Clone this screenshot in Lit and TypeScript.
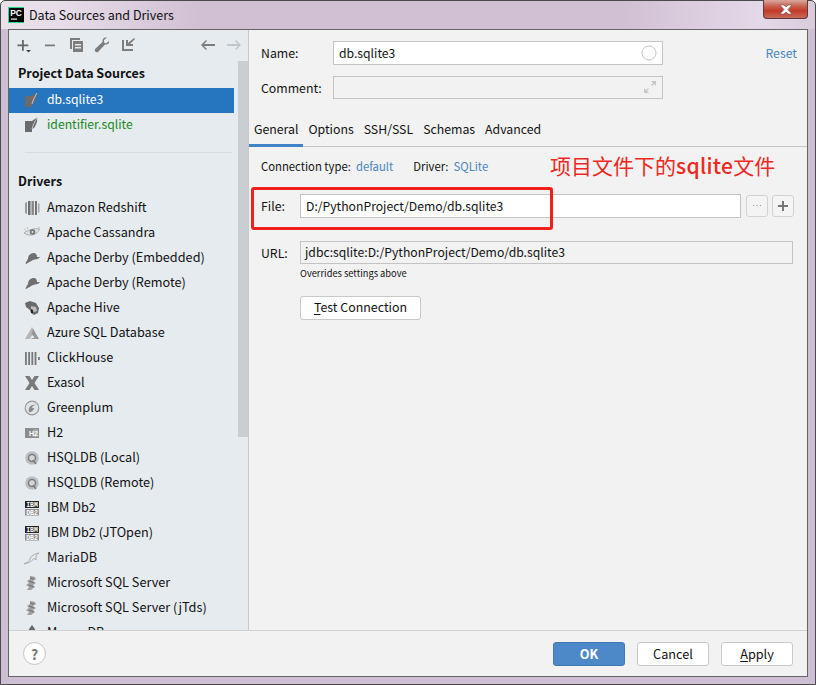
import { LitElement, html, css, svg } from "lit";
import { customElement } from "lit/decorators.js";

const G = "#7d7d7d";

// driver icons, 16x16 in the list
const icons: Record<string, unknown> = {
  sqlite: svg`<path d="M1 4h7l5-3.500c1 3-1 8-3 10.500l-2 1v3H1z" fill="#6b6b6b"/><path d="M8 12c1-4 3-8 5-11" stroke="#d8dde2" stroke-width=".8" fill="none"/>`,
  redshift: svg`<path d="M1 3l2-1v12l-2-1z" fill="#9a9a9a"/><path d="M4 1h2.500v14H4z" fill="#6f6f6f"/><path d="M7.500 1h2.500v14H7.500z" fill="#8a8a8a"/><path d="M11 1h2v14h-2z" fill="#757575"/><path d="M14 3l1.500 1v8l-1.500 1z" fill="#a5a5a5"/>`,
  cassandra: svg`<path d="M0 8c4-3 10-5 15.500-4-2 6-10 8-15.500 4z" fill="#dfe3e7" stroke="#a9a9a9"/><circle cx="8.500" cy="7" r="2.800" fill="#777"/><circle cx="8.500" cy="7" r="1" fill="#dfe3e7"/><path d="M2 5L0 4M4 4L3 2M14 3l2-1" stroke="#b5b5b5" stroke-width=".7"/>`,
  derby: svg`<path d="M4 9c0-4 3-6 6-6 2 0 3 2 3 4l3 0c-1 2-4 2-7 3l-7 4c-1 0 0-2 2-5z" fill="#6f6f6f"/>`,
  hive: svg`<path d="M1 3l5-2 6 2 3 5-1 5-4 2-3-2-1-3-4-3z" fill="#6a6a6a"/><path d="M7 6l5 1 1 4-3 1-3-2z" fill="#bdbdbd"/><path d="M7 9l2 1 0 3-2 0z" fill="#222"/>`,
  azure: svg`<path d="M8 2l-7 12h4.500l5-7z" fill="#b5b5b5"/><path d="M9 3.500l6 10.500H6l4.500-1.500-3-3.500z" fill="#989898"/>`,
  clickhouse: svg`<path d="M1 2h1.800v13H1zM4.200 2H6v13H4.200zM7.400 2h1.800v13H7.400zM10.600 2h1.800v13h-1.800z" fill="#777"/><path d="M14 7h1.800v3H14z" fill="#777"/>`,
  exasol: svg`<path d="M1 1h4.500L8 5l2.500-4H15l-4.500 7 4.500 7h-4.500L8 11l-2.500 4H1l4.500-7z" fill="#7a7a7a"/>`,
  greenplum: svg`<circle cx="8" cy="8" r="6.800" fill="#dfe3e7" stroke="#999" stroke-width="1.200"/><path d="M5 12c-1-5 2-8 7-7-3 0-4 2-4 3l2 0c0 2-3 5-5 4z" fill="#8a8a8a"/>`,
  h2: svg`<path d="M1 3h14v10H1z" fill="#8c8c8c"/><path d="M9 4h5v8H9z" fill="#a8a8a8"/><text x="5" y="11.300" font-size="7" font-weight="700" fill="#fff" font-family="Liberation Sans">H2</text>`,
  hsqldb: svg`<circle cx="8" cy="8" r="6.800" fill="#bcbfc2"/><circle cx="8" cy="8" r="3.500" fill="#d4d7da" stroke="#7d7d7d" stroke-width="1.500"/><path d="M9 10l3 4" stroke="#7d7d7d" stroke-width="1.500"/>`,
  ibm: svg`<path d="M1 1h14v7H1z" fill="#222"/><path d="M1 9h14v6.500H1z" fill="#8c8c8c"/><text x="8" y="7" text-anchor="middle" font-size="6.500" font-weight="700" fill="#fff" font-family="Liberation Mono">IBM</text><text x="8" y="14.500" text-anchor="middle" font-size="6.500" font-weight="700" fill="#fff" font-family="Liberation Mono">DB2</text>`,
  maria: svg`<path d="M0 14c2-2 5-1 6-5 1-3 4-5 9-6-2 1-2 2-3 3l0 4c-1-1-2-2-3-1-1 3-5 4-9 5z" fill="none" stroke="#a5a5a5" stroke-width=".9"/>`,
  mssql: svg`<path d="M6 1c3 0 6 1 6 3l-3 2 3 2-3 2 2 2-4 3-4 0 2-3-3-2 3-2-2-2 3-2z" fill="#a0a0a0"/><path d="M5 6l5 2M5 10l5 2M6 3l4 1" stroke="#6f6f6f"/>`,
  mongo: svg`<path d="M8 0c2 3 4 5 4 8s-2 5-4 7c-2-2-4-4-4-7s2-5 4-8z" fill="#666"/>`,
};

const drivers: [string, string][] = [
  ["Amazon Redshift", "redshift"],
  ["Apache Cassandra", "cassandra"],
  ["Apache Derby (Embedded)", "derby"],
  ["Apache Derby (Remote)", "derby"],
  ["Apache Hive", "hive"],
  ["Azure SQL Database", "azure"],
  ["ClickHouse", "clickhouse"],
  ["Exasol", "exasol"],
  ["Greenplum", "greenplum"],
  ["H2", "h2"],
  ["HSQLDB (Local)", "hsqldb"],
  ["HSQLDB (Remote)", "hsqldb"],
  ["IBM Db2", "ibm"],
  ["IBM Db2 (JTOpen)", "ibm"],
  ["MariaDB", "maria"],
  ["Microsoft SQL Server", "mssql"],
  ["Microsoft SQL Server (jTds)", "mssql"],
  ["MongoDB", "mongo"],
];

@customElement("app-root")
export class AppRoot extends LitElement {
  static styles = css`
    :host {
      display: block;
      width: 816px;
      height: 685px;
      overflow: hidden;
      position: relative;
      font-family: "Noto Sans CJK SC", "Noto Sans", sans-serif;
      font-size: 12.7px;
      color: #111;
    }
    .window {
      box-sizing: border-box;
      width: 816px;
      height: 685px;
      display: flex;
      flex-direction: column;
      padding: 0 7px 7px 7px;
      border: 1px solid #4a4a4a;
      border-radius: 5px 5px 0 0;
      background: linear-gradient(90deg, #e9e1ea 0, #e6dde8 60px, #d1bfd3 200px, #d1bfd3 620px, #e4d9e8 760px, #d9cbdc 100%) no-repeat top / 100% 28px, #cfbfd4;
    }
    .title {
      height: 28px;
      flex: none;
      display: flex;
      align-items: flex-start;
    }
    .logo {
      width: 16px;
      height: 16px;
      margin-top: 6px;
      margin-right: 5px;
    }
    .title-text {
      margin-top: 3px;
      line-height: 21px;
      font-size: 12.5px;
    }
    .close {
      margin-left: auto;
      width: 45px;
      height: 19px;
      box-sizing: border-box;
      border: 1px solid #5a3a3a;
      border-top: none;
      border-radius: 0 0 4px 4px;
      background: linear-gradient(180deg, #d9a9a0 0, #c8604e 35%, #c23a28 60%, #c86a58 100%);
      display: flex;
      align-items: center;
      justify-content: center;
      margin-top: -1px;
    }
    .body {
      flex: 1;
      min-height: 0;
      display: flex;
      flex-direction: column;
      border: 1px solid #666;
      background: #f2f2f2;
    }
    .main {
      flex: 1;
      min-height: 0;
      display: flex;
    }
    .side {
      box-sizing: border-box;
      width: 240px;
      flex: none;
      background: #e6ebf0;
      border-right: 1px solid #c9c9c9;
      position: relative;
      overflow: hidden;
    }
    .scroll {
      position: absolute;
      right: 0;
      top: 31px;
      width: 10px;
      height: 376px;
      background: #c9ced3;
    }
    .tools {
      height: 29px;
      display: flex;
      align-items: center;
      padding: 0 6px 0 8px;
      gap: 10px;
    }
    .tools svg {
      width: 16px;
      height: 16px;
      display: block;
      flex: none;
      overflow: visible;
    }
    .tools svg:first-child {
      margin-right: -1px;
    }
    .tools .spacer {
      flex: 1;
    }
    .head {
      font-weight: 700;
      font-size: 12.5px;
      height: 29px;
      line-height: 27px;
      padding-left: 9px;
      color: #111;
    }
    .row {
      box-sizing: border-box;
      height: 25px;
      padding-bottom: 4px;
      margin-right: 14px;
      display: flex;
      align-items: center;
      white-space: nowrap;
    }
    .row svg {
      width: 16px;
      height: 16px;
      margin: 3px 7px 0 15px;
      flex: none;
    }
    .row.sel {
      background: #2675bf;
      color: #fff;
      font-size: 12.2px;
    }
    .row.green {
      color: #1a8a1a;
      font-size: 12.2px;
    }
    .sep {
      height: 1px;
      margin: 14px 16px 14px 16px;
      background: #d9dde1;
    }
    .pane {
      flex: 1;
      min-width: 0;
      display: flex;
      flex-direction: column;
    }
    .top {
      padding: 11px 10px 0 12px;
      display: flex;
      flex-direction: column;
      gap: 11px;
    }
    .line {
      display: flex;
      align-items: center;
    }
    .line label {
      width: 72px;
      flex: none;
      font-size: 12.3px;
    }
    .input {
      box-sizing: border-box;
      height: 24px;
      border: 1px solid #c4c4c4;
      background: #fff;
      display: flex;
      align-items: center;
      padding: 0 0 1px 5px;
      white-space: nowrap;
      font-size: 12.2px;
    }
    .input.off {
      background: #f2f2f2;
    }
    .short {
      height: 23px;
    }
    .wide {
      width: 330px;
      justify-content: space-between;
      padding-right: 5px;
    }
    .reset {
      margin-left: auto;
      color: #4a86c0;
      font-size: 12.3px;
    }
    .tabs {
      display: flex;
      margin-top: 18px;
      height: 30px;
      border-bottom: 1px solid #c4c4c4;
      box-sizing: border-box;
    }
    .tab {
      padding: 0 5px;
      line-height: 24px;
      box-sizing: border-box;
      height: 30px;
      white-space: nowrap;
      font-size: 12.3px;
    }
    .tab.on {
      border-bottom: 3px solid #4083c9;
    }
    .content {
      padding: 0 12px;
      display: flex;
      flex-direction: column;
    }
    .conn {
      display: flex;
      align-items: center;
      height: 38px;
      font-size: 11.3px;
      white-space: nowrap;
    }
    .link {
      color: #4a86c0;
    }
    .conn .link {
      margin-left: 5px;
      margin-right: 20px;
    }
    .form {
      display: flex;
      align-items: center;
      margin-top: 9px;
    }
    .form label {
      width: 39px;
      flex: none;
      font-size: 12.3px;
    }
    .file {
      width: 441px;
    }
    .url {
      width: 493px;
      padding-left: 4px;
    }
    .mini {
      box-sizing: border-box;
      width: 22px;
      height: 22px;
      margin-left: 5px;
      border: 1px solid #d2d2d2;
      border-radius: 3px;
      display: flex;
      align-items: center;
      justify-content: center;
      color: #999;
      background: #f4f4f4;
    }
    .mini + .mini {
      margin-left: 4px;
    }
    .note {
      margin-left: 39px;
      margin-top: 2px;
      font-size: 9.3px;
      line-height: 14px;
    }
    .btn {
      box-sizing: border-box;
      width: 72px;
      height: 24px;
      border: 1px solid #c9c9c9;
      border-radius: 3px;
      background: #fff;
      display: flex;
      align-items: center;
      justify-content: center;
      white-space: nowrap;
    }
    .btn u {
      text-underline-offset: 2px;
    }
    .test {
      width: 121px;
      height: 24px;
      padding-bottom: 2px;
      margin-left: 39px;
      margin-top: 16px;
      font-size: 12.4px;
    }
    .bar {
      height: 46px;
      flex: none;
      border-top: 1px solid #d2d2d2;
      box-sizing: border-box;
      display: flex;
      align-items: center;
      gap: 12px;
      padding: 0 14px;
    }
    .help {
      box-sizing: border-box;
      width: 23px;
      height: 23px;
      border: 1px solid #c4c4c4;
      border-radius: 50%;
      background: #fff;
      display: flex;
      align-items: center;
      justify-content: center;
      font-weight: 700;
      font-size: 14px;
      color: #777;
      margin-right: auto;
    }
    .ok {
      background: #4d89c8;
      border-color: #3f78b5;
      color: #fff;
      font-weight: 700;
    }
    .mark {
      position: absolute;
      left: 251px;
      top: 187px;
      width: 302px;
      height: 43px;
      box-sizing: border-box;
      border: 3px solid #f0201a;
      border-radius: 3px;
    }
    .note-red {
      position: absolute;
      left: 550px;
      top: 150px;
      font-size: 21px;
      line-height: 30px;
      color: #f0281e;
      white-space: nowrap;
    }
    .note-red b {
      font-weight: 500;
      letter-spacing: 0.3px;
    }
  `;

  private icon(name: string) {
    return html`<svg viewBox="0 0 16 16">${icons[name]}</svg>`;
  }

  private toolbar() {
    return html`<div class="tools">
      <svg viewBox="0 0 16 16">
        <path d="M5 3h1.800v4.500h4.500v1.800H6.800v4.500H5V9.300H.5V7.500H5z" fill="#666" />
        <path d="M9 13h5l-2.500 2.500z" fill="#444" />
      </svg>
      <svg viewBox="0 0 16 16"><path d="M3 7.500h10v1.800H3z" fill=${G} /></svg>
      <svg viewBox="0 0 16 16">
        <path d="M2 1h10v2H4v9H2z" fill=${G} />
        <path d="M5 4h10v11H5zM7 7v1.500h6V7zM7 10v1.500h6V10z" fill=${G} fill-rule="evenodd" />
      </svg>
      <svg viewBox="0 0 16 16">
        <path d="M15 4l-3 2.500-2-1L10 3l3-2.500C10 0 8 1.500 8.500 5L1 12c-1 2 1 4 3 3l7-7.500c3 .5 4.500-1 4-3.500z" fill=${G} />
      </svg>
      <svg viewBox="0 0 16 16">
        <path d="M2 3h2v9h9v2H2z" fill=${G} />
        <path d="M14 1l1 1-5 5 3 0v2H6V3h2l0 3z" fill=${G} />
      </svg>
      <span class="spacer"></span>
      <svg viewBox="0 0 16 16"><path d="M1 8l5-5 1 1-3 3h11v2H4l3 3-1 1z" fill=${G} /></svg>
      <svg viewBox="0 0 16 16"><path d="M15 8l-5-5-1 1 3 3H1v2h11l-3 3 1 1z" fill="#c2c6ca" /></svg>
    </div>`;
  }

  private sidebar() {
    return html`<div class="side">
      ${this.toolbar()}
      <div class="head">Project Data Sources</div>
      <div class="row sel">${this.icon("sqlite")}db.sqlite3</div>
      <div class="row green">${this.icon("sqlite")}identifier.sqlite</div>
      <div class="sep"></div>
      <div class="head">Drivers</div>
      ${drivers.map(([name, ic]) => html`<div class="row">${this.icon(ic)}${name}</div>`)}
      <div class="scroll"></div>
    </div>`;
  }

  private pane() {
    return html`<div class="pane">
      <div class="top">
        <div class="line">
          <label>Name:</label>
          <div class="input wide">
            db.sqlite3
            <svg width="16" height="16" viewBox="0 0 16 16"><circle cx="8" cy="8" r="7" fill="#fff" stroke="#c4c4c4" /></svg>
          </div>
          <span class="reset">Reset</span>
        </div>
        <div class="line">
          <label>Comment:</label>
          <div class="input off wide short" style="justify-content: flex-end">
            <svg width="14" height="14" viewBox="0 0 14 14">
              <path d="M8 1h5v5l-2-2-2 2-1-1 2-2zM6 13H1V8l2 2 2-2 1 1-2 2z" fill="#c9c9c9" />
            </svg>
          </div>
        </div>
      </div>
      <div class="tabs">
        <div class="tab on">General</div>
        <div class="tab">Options</div>
        <div class="tab">SSH/SSL</div>
        <div class="tab">Schemas</div>
        <div class="tab">Advanced</div>
      </div>
      <div class="content">
        <div class="conn">
          Connection type:<span class="link">default</span>Driver:<span class="link">SQLite</span>
        </div>
        <div class="form">
          <label>File:</label>
          <div class="input file">D:/PythonProject/Demo/db.sqlite3</div>
          <div class="mini">
            <svg width="10" height="4" viewBox="0 0 10 4"><path d="M1 1h1v1H1zM4.500 1h1v1h-1zM8 1h1v1H8z" fill="#999" /></svg>
          </div>
          <div class="mini">
            <svg width="12" height="12" viewBox="0 0 12 12"><path d="M5 1h2v4h4v2H7v4H5V7H1V5h4z" fill="#777" /></svg>
          </div>
        </div>
        <div class="form" style="margin-top: 23px">
          <label>URL:</label>
          <div class="input off url short">jdbc:sqlite:D:/PythonProject/Demo/db.sqlite3</div>
        </div>
        <div class="note">Overrides settings above</div>
        <div class="btn test"><span><u>T</u>est Connection</span></div>
      </div>
    </div>`;
  }

  render() {
    return html`<div class="window">
        <div class="title">
          <svg class="logo" viewBox="0 0 16 16">
            <path d="M0 0h16v16H0z" fill="#000" />
            <path d="M0 0h16v1H1v14h15v1H0z" fill="#21d789" />
            <text x="2.200" y="9.300" font-size="8.500" font-weight="700" fill="#fff" font-family="Liberation Sans">PC</text>
            <path d="M3 11.500h6v1.200H3z" fill="#fff" />
          </svg>
          <span class="title-text">Data Sources and Drivers</span>
          <div class="close">
            <svg width="14" height="11" viewBox="0 0 14 11">
              <path d="M1 1h4l2 2 2-2h4l-4 4.500 4 4.500H9L7 8l-2 2H1l4-4.500z" fill="#fff" stroke="#7a4a4a" stroke-width=".6" />
            </svg>
          </div>
        </div>
        <div class="body">
          <div class="main">${this.sidebar()} ${this.pane()}</div>
          <div class="bar">
            <div class="help">?</div>
            <div class="btn ok">OK</div>
            <div class="btn">Cancel</div>
            <div class="btn"><span><u>A</u>pply</span></div>
          </div>
        </div>
      </div>
      <div class="mark"></div>
      <div class="note-red">项目文件下的<b>sqlite</b>文件</div>`;
  }
}
